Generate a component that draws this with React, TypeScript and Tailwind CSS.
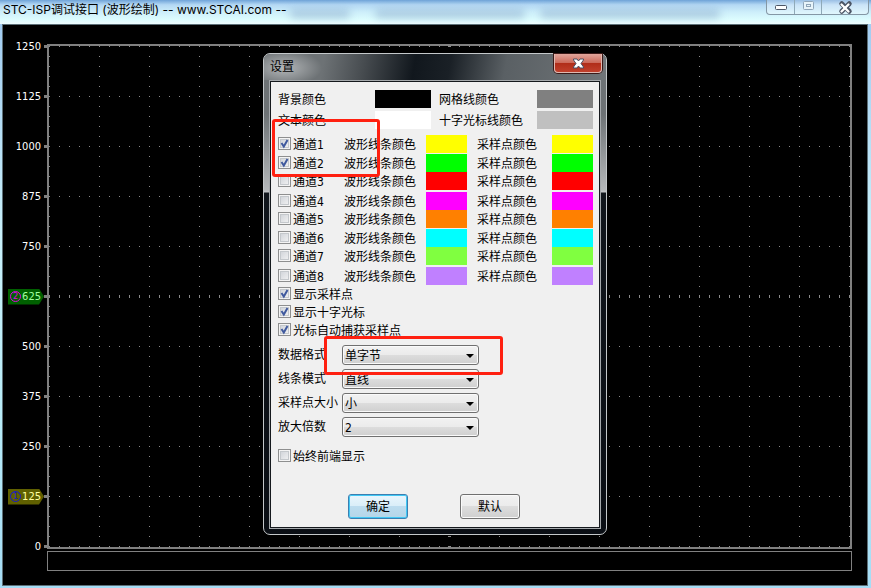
import { X } from "lucide-react";

const ticks = [1250, 1125, 1000, 875, 750, 625, 500, 375, 250, 125, 0];

const markers: Record<number, { sign: string; tag: string; signColor: string }> = {
  625: { sign: "2", tag: "bg-[#006000] text-[#a0ffa0]", signColor: "border-[#e000e0] text-[#e000e0]" },
  125: { sign: "1", tag: "bg-[#606000] text-[#ffffa0]", signColor: "border-[#1818d0] text-[#1818d0]" },
};

const channels = [
  { id: 1, on: true, color: "bg-[#ffff00]", gap: "mt-0" },
  { id: 2, on: true, color: "bg-[#00ff00]", gap: "mt-px" },
  { id: 3, on: false, color: "bg-[#ff0000]", gap: "mt-0" },
  { id: 4, on: false, color: "bg-[#ff00ff]", gap: "mt-0.5" },
  { id: 5, on: false, color: "bg-[#ff8000]", gap: "mt-0" },
  { id: 6, on: false, color: "bg-[#00ffff]", gap: "mt-px" },
  { id: 7, on: false, color: "bg-[#80ff40]", gap: "mt-0" },
  { id: 8, on: false, color: "bg-[#c080ff]", gap: "mt-0.5" },
];

const selects = [
  { id: "format", label: "数据格式", value: "单字节" },
  { id: "line", label: "线条模式", value: "直线" },
  { id: "size", label: "采样点大小", value: "小" },
  { id: "zoom", label: "放大倍数", value: "2" },
];

function Tick({ id, label, on }: { id: string; label: string; on: boolean }) {
  return (
    <label htmlFor={id} className="flex h-[18px] items-start gap-0.5 leading-5 whitespace-nowrap">
      <span className="mt-0.5 grid size-[13px] shrink-0">
        <input
          id={id}
          type="checkbox"
          defaultChecked={on}
          className="peer col-start-1 row-start-1 size-[13px] appearance-none border border-[#8e8f8f] bg-linear-to-br from-[#cbcfd5] to-[#f6f6f6] shadow-[inset_0_0_0_1px_#f4f4f4,inset_0_0_0_2px_#c4c8cc]"
        />
        <svg
          viewBox="0 0 13 13"
          aria-hidden="true"
          className="pointer-events-none invisible col-start-1 row-start-1 size-[13px] peer-checked:visible"
        >
          <path d="M3.500 6L5.800 9.500L9.500 3" fill="none" stroke="#405a9e" strokeWidth="2" />
        </svg>
      </span>
      {label}
    </label>
  );
}

function Swatch({ name, color, size }: { name: string; color: string; size: string }) {
  return <button type="button" aria-label={name} className={`block h-[18px] ${size} ${color}`} />;
}

function Plot() {
  return (
    <svg className="block h-full w-full" shapeRendering="crispEdges">
      <defs>
        <pattern id="rows" width="10" height="50" patternUnits="userSpaceOnUse">
          <rect width="1" height="1" fill="#8c8c8c" />
        </pattern>
        <pattern id="cols" width="50" height="10" patternUnits="userSpaceOnUse">
          <rect width="1" height="1" fill="#8c8c8c" />
        </pattern>
        <pattern id="midRow" width="10" height="3" patternUnits="userSpaceOnUse">
          <rect width="1" height="3" fill="#8c8c8c" />
        </pattern>
        <pattern id="midCol" width="3" height="10" patternUnits="userSpaceOnUse">
          <rect width="3" height="1" fill="#8c8c8c" />
        </pattern>
      </defs>
      <rect width="100%" height="100%" fill="url(#rows)" />
      <rect width="100%" height="100%" fill="url(#cols)" />
      <g transform="translate(0 249)">
        <rect width="100%" height="3" fill="url(#midRow)" />
      </g>
      <g transform="translate(399 0)">
        <rect width="3" height="100%" fill="url(#midCol)" />
      </g>
    </svg>
  );
}

function Axis() {
  return (
    <div className="flex w-[39px] shrink-0 flex-col justify-between py-0.5">
      {ticks.map((t) => {
        const m = markers[t];
        return (
          <div key={t} className="flex h-px items-center justify-end">
            {m ? (
              <span
                className={`flex h-4 w-9 shrink-0 items-center justify-between pr-[3px] pl-0.5 [clip-path:polygon(0_0,31px_0,100%_50%,31px_100%,0_100%)] ${m.tag}`}
              >
                <span
                  className={`flex size-[11px] items-center justify-center rounded-full border text-[9px] leading-none ${m.signColor}`}
                >
                  {m.sign}
                </span>
                {t}
              </span>
            ) : (
              <span className="pr-[3px]">{t}</span>
            )}
            <span className="h-[3px] w-[3px] shrink-0 bg-[#808080]" />
          </div>
        );
      })}
    </div>
  );
}

function Settings() {
  return (
    <section
      aria-label="设置"
      className="absolute top-[53px] left-[263px] w-[344px] rounded-[7px] border border-[#c4c8ca] bg-[linear-gradient(180deg,#6d7275_0,#6d7275_60px,#b5b8ba_136px,#c4c6c8_138px,#11161c_139px,#0a0e14_100%)] px-[5px] pb-[5px] shadow-[0_0_0_1px_#000]"
    >
      <header className="-mx-[5px] flex h-[26px] items-start justify-between rounded-t-[6px] bg-[radial-gradient(ellipse_38px_18px_at_20px_14px,#b4b7b9_0,transparent_100%),linear-gradient(100deg,#6d7275_0,#6d7275_60px,#474c50_100px,#11171d_150px,#1a2026_185px,#5a6064_240px,#707578_100%)] pr-1 pl-1.5">
        <h2 className="pt-[3px] text-[12px] leading-5 text-black">设置</h2>
        <button
          type="button"
          aria-label="关闭"
          className="flex h-[19px] w-12 items-center justify-center rounded-b-[4px] border border-t-0 border-[#e0b8b0] bg-[linear-gradient(180deg,#e0a59b_0,#cc6a5b_48%,#b02c18_50%,#c0402c_100%)] shadow-[0_0_0_1px_#3b1a18]"
        >
          <svg width="13" height="11" viewBox="0 0 13 11" aria-hidden="true">
            <path d="M1.500 1h3.500l1.500 2L8 1h3.500v1L9 5.500 11.500 9v1H8L6.500 8 5 10H1.500V9L4 5.500 1.500 2z" fill="#fff" stroke="#4a4f63" />
          </svg>
        </button>
      </header>
      <div className="relative border border-[#a5a9ac] bg-[#f0f0f0] px-2 py-[9px] text-black shadow-[inset_0_0_0_1px_#15191d]">
        <div className="grid auto-rows-[18px] grid-cols-[97px_64px_98px_56px] gap-y-[3px] leading-5">
          <span>背景颜色</span>
          <Swatch name="背景颜色" color="bg-black" size="w-14" />
          <span>网格线颜色</span>
          <Swatch name="网格线颜色" color="bg-[#808080]" size="w-14" />
          <span>文本颜色</span>
          <Swatch name="文本颜色" color="bg-white" size="w-14" />
          <span>十字光标线颜色</span>
          <Swatch name="十字光标线颜色" color="bg-[#c0c0c0]" size="w-14" />
        </div>
        <div className="mt-1.5 leading-5">
          {channels.map((c) => (
            <div key={c.id} className={`grid auto-rows-[18px] grid-cols-[66px_82px_51px_75px_41px] ${c.gap}`}>
              <Tick id={`channel-${c.id}`} label={`通道${c.id}`} on={c.on} />
              <span>波形线条颜色</span>
              <Swatch name={`通道${c.id} 波形线条颜色`} color={c.color} size="w-[41px]" />
              <span>采样点颜色</span>
              <Swatch name={`通道${c.id} 采样点颜色`} color={c.color} size="w-[41px]" />
            </div>
          ))}
        </div>
        <Tick id="points" label="显示采样点" on />
        <Tick id="cross" label="显示十字光标" on />
        <Tick id="snap" label="光标自动捕获采样点" on />
        <div className="mt-1.5 flex flex-col gap-1">
          {selects.map((s) => (
            <div key={s.id} className="grid grid-cols-[64px_137px] leading-5">
              <label htmlFor={s.id} className="whitespace-nowrap">
                {s.label}
              </label>
              <span className="grid h-5">
                <select
                  id={s.id}
                  className="col-start-1 row-start-1 h-5 w-full appearance-none rounded-[3px] border border-[#707070] bg-[linear-gradient(180deg,#f2f2f2_0,#ebebeb_50%,#dddddd_50%,#cfcfcf_100%)] px-0.5 pt-px leading-[18px] shadow-[inset_0_0_0_1px_#fafafa]"
                >
                  <option>{s.value}</option>
                </select>
                <svg
                  width="8"
                  height="4"
                  viewBox="0 0 8 4"
                  aria-hidden="true"
                  className="pointer-events-none col-start-1 row-start-1 mt-px mr-[5px] self-center justify-self-end"
                >
                  <path d="M0 0h8L4 4z" fill="#000" />
                </svg>
              </span>
            </div>
          ))}
        </div>
        <div className="mt-2.5">
          <Tick id="top" label="始终前端显示" on={false} />
        </div>
        <div className="mt-[29px] flex justify-center gap-[52px] pr-0.5">
          <button
            type="button"
            className="h-[25px] w-[60px] rounded-[3px] border border-[#3c7fb1] bg-[linear-gradient(180deg,#eaf6fd_0,#d9edf8_50%,#bcdcef_50%,#b5d6e8_100%)] shadow-[inset_0_0_0_1px_#42c8f4]"
          >
            确定
          </button>
          <button
            type="button"
            className="h-[25px] w-[60px] rounded-[3px] border border-[#707070] bg-[linear-gradient(180deg,#f2f2f2_0,#ebebeb_50%,#dddddd_50%,#cfcfcf_100%)] shadow-[inset_0_0_0_1px_#fafafa]"
          >
            默认
          </button>
        </div>
        <div className="pointer-events-none absolute top-[38px] left-[2px] h-[58px] w-[108px] rounded-[3px] border-3 border-[#ff2010]" />
        <div className="pointer-events-none absolute top-[255px] left-[54px] h-[39px] w-[179px] rounded-[3px] border-3 border-[#ff2010]" />
      </div>
    </section>
  );
}

function Blur({ place }: { place: string }) {
  return <span className={`absolute top-2.5 h-2 rounded-full bg-[#5f7fae]/40 blur-[4px] ${place}`} />;
}

export default function App() {
  return (
    <div className="relative flex h-screen flex-col overflow-hidden bg-[linear-gradient(180deg,#9ec8f0_0,#c8f0fa_40%,#b8ecf8_70%,#a5dcf5_100%)] pr-[3px] pb-0.5 pl-0.5 font-['DejaVu_Sans_Condensed','Noto_Sans_CJK_SC',sans-serif] text-[12px]">
      <header className="relative -mr-[3px] -ml-0.5 flex h-6 shrink-0 items-start justify-between overflow-hidden bg-[linear-gradient(180deg,#6fa3d8_0,#b4d8f4_20%,#cdeefa_50%,#dcfcfe_80%,#effdff_100%)] pr-0.5 pl-[3px]">
        <Blur place="left-[290px] w-[60px]" />
        <Blur place="left-[375px] w-[150px]" />
        <Blur place="left-[540px] w-[180px]" />
        <h1 className="relative font-['Inter','Noto_Sans_CJK_SC',sans-serif] text-[12px] leading-5 whitespace-nowrap text-black">
          STC-ISP调试接口 (波形绘制) -- www.STCAI.com --
        </h1>
        <div className="relative flex h-[15px] shrink-0 rounded-b-[4px] border border-t-0 border-[#8497a5] bg-white/30">
          <button type="button" aria-label="最小化" className="flex w-7 items-center justify-center border-r border-[#8fa9b8]">
            <svg width="12" height="5" viewBox="0 0 12 5" className="-mb-px">
              <rect x=".5" y=".5" width="11" height="4" rx="1" fill="#fff" stroke="#4c5565" />
            </svg>
          </button>
          <button type="button" aria-label="最大化" disabled className="flex w-[27px] items-start justify-center border-r border-[#8fa9b8] pt-px">
            <svg width="11" height="9" viewBox="0 0 11 9" fill="none" stroke="#8fa5b8">
              <rect x=".5" y=".5" width="10" height="8" rx="1" fill="#e8f4fa" />
              <rect x="3.500" y="3.500" width="4" height="2" />
            </svg>
          </button>
          <button type="button" aria-label="关闭窗口" className="grid w-[46px] place-items-center pb-2">
            <X strokeWidth={8} className="col-start-1 row-start-1 size-[15px] text-[#4c5565]" />
            <X strokeWidth={4} className="col-start-1 row-start-1 size-[14px] text-white" />
          </button>
        </div>
      </header>
      <main className="flex min-h-0 flex-1 flex-col border border-[#5d7078] bg-black pt-[19px] pr-[15px] pb-[14px] pl-[5px]">
        <div className="flex min-h-0 flex-1 text-[11px] leading-4 text-white">
          <Axis />
          <div className="min-w-0 flex-1 border-2 border-[#808080]">
            <Plot />
          </div>
        </div>
        <div className="mt-0.5 ml-[39px] h-5 shrink-0 border border-[#808080]" />
      </main>
      <Settings />
    </div>
  );
}
